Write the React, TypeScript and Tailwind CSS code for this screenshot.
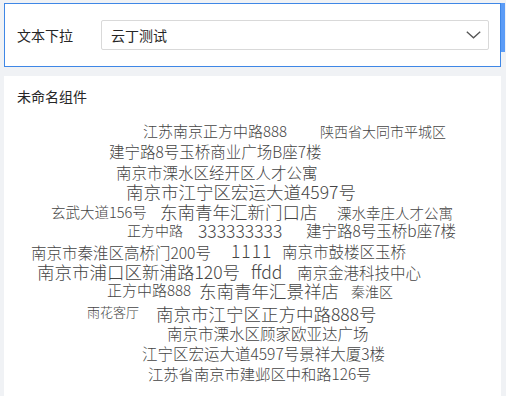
const WORDS = [
  { text: "江苏南京正方中路888", cls: "left-[139px] top-[48px] text-[15px]" },
  { text: "陕西省大同市平城区", cls: "left-[316px] top-[49px] text-[14px]" },
  { text: "建宁路8号玉桥商业广场B座7楼", cls: "left-[105px] top-[68px] text-[15.5px]" },
  { text: "南京市溧水区经开区人才公寓", cls: "left-[112px] top-[89px] text-[15.5px]" },
  { text: "南京市江宁区宏运大道4597号", cls: "left-[122px] top-[108px] text-[17.5px]" },
  { text: "玄武大道156号", cls: "left-[47px] top-[129px] text-[14.5px]" },
  { text: "东南青年汇新门口店", cls: "left-[156px] top-[128px] text-[17.5px]" },
  { text: "溧水幸庄人才公寓", cls: "left-[333px] top-[130px] text-[14.5px]" },
  { text: "正方中路", cls: "left-[123px] top-[148px] text-[14px]" },
  { text: "333333333", cls: "left-[194px] top-[147px] text-[17.5px]" },
  { text: "建宁路8号玉桥b座7楼", cls: "left-[302px] top-[147px] text-[15.5px]" },
  { text: "南京市秦淮区高桥门200号", cls: "left-[27px] top-[169px] text-[15.5px]" },
  { text: "1111", cls: "left-[227px] top-[167px] text-[17.5px] tracking-[1px]" },
  { text: "南京市鼓楼区玉桥", cls: "left-[278px] top-[168px] text-[15.5px]" },
  { text: "南京市浦口区新浦路120号", cls: "left-[33px] top-[188px] text-[17.5px]" },
  { text: "ffdd", cls: "left-[247px] top-[188px] text-[17.5px]" },
  { text: "南京金港科技中心", cls: "left-[293px] top-[189px] text-[15.5px]" },
  { text: "正方中路888", cls: "left-[103px] top-[207px] text-[15px]" },
  { text: "东南青年汇景祥店", cls: "left-[195px] top-[207px] text-[17.5px]" },
  { text: "秦淮区", cls: "left-[347px] top-[209px] text-[14px]" },
  { text: "雨花客厅", cls: "left-[83px] top-[230px] text-[13px]" },
  { text: "南京市江宁区正方中路888号", cls: "left-[152px] top-[230px] text-[17.5px]" },
  { text: "南京市溧水区顾家欧亚达广场", cls: "left-[163px] top-[250px] text-[15.5px]" },
  { text: "江宁区宏运大道4597号景祥大厦3楼", cls: "left-[138px] top-[270px] text-[15.5px]" },
  { text: "江苏省南京市建邺区中和路126号", cls: "left-[144px] top-[290px] text-[15.3px]" },
];

export default function App() {
  return (
    <div className="h-[396px] w-[506px] overflow-hidden bg-[#f0f2f5] pl-[4px] pt-[3px] font-['Noto_Sans_CJK_SC','Noto_Sans',sans-serif] text-[#333]">
      {/* Dropdown card */}
      <div className="flex items-start">
        <div className="flex h-[64px] w-[497px] items-center border border-[#3f87e6] bg-white pl-[12px] pr-[11px]">
          <span className="w-[84px] shrink-0 text-[14px] leading-5 text-[#262626]">文本下拉</span>
          <div className="flex h-[30px] flex-1 items-center justify-between rounded-[2px] border border-[#d9d9d9] bg-white pl-[9px] pr-[7px]">
            <span className="text-[14px] leading-5 text-[#262626]">云丁测试</span>
            <svg width="15" height="8" viewBox="0 0 15 8" fill="none">
              <polyline points="0.8,0.8 7.5,6.8 14.2,0.8" stroke="#555" strokeWidth="1.3" />
            </svg>
          </div>
        </div>
        <div className="h-[49px] w-[4px] bg-[#5b9cf7]" />
      </div>

      {/* Word cloud card */}
      <div className="mt-[9px] h-[330px] w-[497px] bg-white pl-[13px] pt-[10px]">
        <div className="text-[14px] leading-5 text-[#262626]">未命名组件</div>
        <div className="relative -ml-[13px] -mt-[30px] h-[320px]">
          {WORDS.map((w, i) => (
            <span key={i} className={`absolute whitespace-nowrap leading-[0.92] font-light text-[#454545] ${w.cls}`}>
              {w.text}
            </span>
          ))}
        </div>
      </div>
    </div>
  );
}
